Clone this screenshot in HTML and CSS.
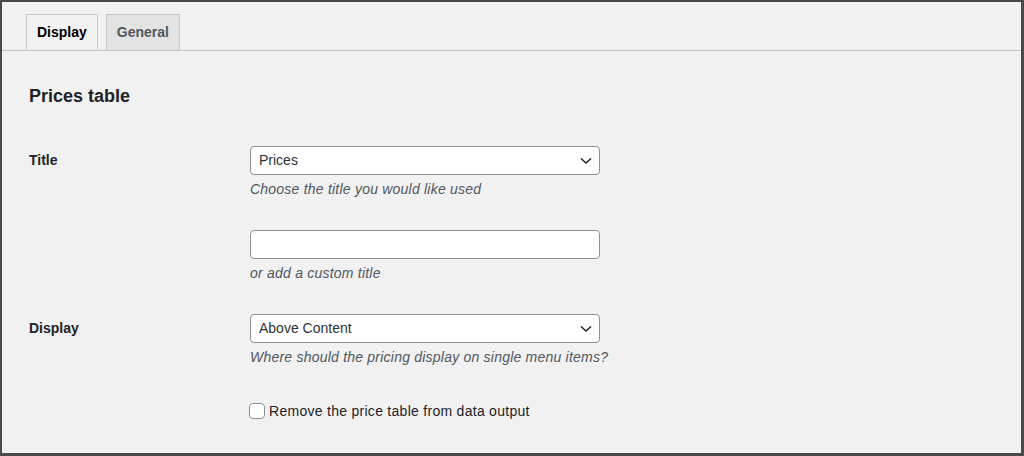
FILE: index.html
```html
<!DOCTYPE html>
<html>
<head>
<meta charset="utf-8">
<link rel="stylesheet" href="styles.css">
</head>
<body>
<div class="frame">
  <nav class="tabs">
    <a class="tab active">Display</a>
    <a class="tab">General</a>
  </nav>
  <div class="content">
    <h2 class="heading">Prices table</h2>
    <div class="row">
      <div class="label">Title</div>
      <div class="fields">
        <div class="select">
          <span class="select-text">Prices</span>
          <svg class="chev" width="12" height="8" viewBox="0 0 12 8"><path d="M1 1.5 L6 6 L11 1.5" fill="none" stroke="#1d2327" stroke-width="1.5"/></svg>
        </div>
        <p class="desc">Choose the title you would like used</p>
        <input class="text-input" type="text">
        <p class="desc">or add a custom title</p>
      </div>
    </div>
    <div class="row">
      <div class="label">Display</div>
      <div class="fields">
        <div class="select">
          <span class="select-text">Above Content</span>
          <svg class="chev" width="12" height="8" viewBox="0 0 12 8"><path d="M1 1.5 L6 6 L11 1.5" fill="none" stroke="#1d2327" stroke-width="1.5"/></svg>
        </div>
        <p class="desc">Where should the pricing display on single menu items?</p>
        <label class="check"><span class="box"></span>Remove the price table from data output</label>
      </div>
    </div>
  </div>
</div>
</body>
</html>
```
FILE: styles.css
```css
* { box-sizing: border-box; }
html, body { margin: 0; padding: 0; }
body {
  font-family: "Liberation Sans", Arial, sans-serif;
  font-size: 14px;
  color: #1d2327;
  background: #f1f1f1;
}
.frame {
  width: 1024px;
  height: 456px;
  border-style: solid;
  border-color: #4a4a4a;
  border-width: 2px 3px 3px 2px;
  background: #f1f1f1;
  overflow: hidden;
}
.tabs {
  display: flex;
  gap: 8px;
  padding: 12px 0 0 24px;
  border-bottom: 1px solid #c3c4c7;
  height: 49px;
}
.tab {
  display: block;
  height: 36px;
  padding: 0 10px;
  line-height: 34px;
  font-weight: 700;
  font-size: 14px;
  color: #50575e;
  background: #e3e3e3;
  border: 1px solid #c8c8ca;
  border-bottom: none;
  margin-bottom: -1px;
}
.tab.active {
  background: #f1f1f1;
  color: #000;
  border-bottom: 1px solid #f1f1f1;
}
.content {
  padding: 0 0 0 27px;
}
.heading {
  margin: 33px 0 0;
  font-size: 18px;
  line-height: 24px;
  font-weight: 700;
  color: #1d2327;
}
.row {
  display: flex;
  margin-top: 38px;
}
.row + .row { margin-top: 31px; }
.label {
  width: 221px;
  flex: none;
  font-weight: 700;
  line-height: 29px;
  color: #1d2327;
}
.fields {
  display: flex;
  flex-direction: column;
  align-items: flex-start;
}
.select {
  position: relative;
  width: 350px;
  height: 29px;
  border: 1px solid #8c8f94;
  border-radius: 4px;
  background: #fff;
  padding: 0 30px 0 8px;
  line-height: 27px;
  color: #2c3338;
}
.chev {
  position: absolute;
  right: 7px;
  top: 10px;
}
.desc {
  margin: 4px 0 0;
  line-height: 20px;
  font-style: italic;
  color: #50575e;
  letter-spacing: 0.22px;
}
.text-input {
  margin-top: 31px;
  width: 350px;
  height: 29px;
  border: 1px solid #8c8f94;
  border-radius: 4px;
  background: #fff;
}
.check {
  display: flex;
  align-items: center;
  gap: 4px;
  margin-top: 34px;
  line-height: 20px;
  color: #1d2327;
  margin-left: -1px;
  letter-spacing: 0.28px;
}
.box {
  width: 16px;
  height: 16px;
  border: 1px solid #8c8f94;
  border-radius: 4px;
  background: #fff;
}
```
